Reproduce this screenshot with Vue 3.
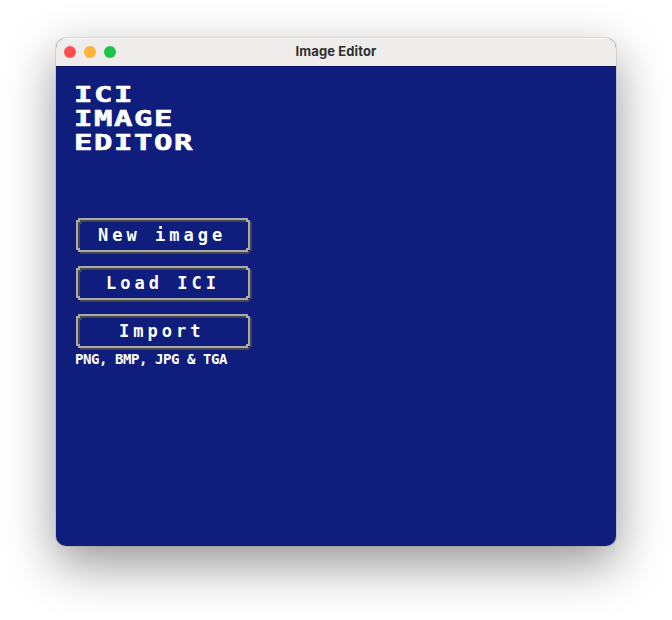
<script setup>
const titleLines = ['ICI', 'IMAGE', 'EDITOR']
const actions = [
  { label: 'New image', left: 22 },
  { label: 'Load ICI', left: 30 },
  { label: 'Import', left: 43 },
]
</script>

<template>
  <main class="desktop">
    <section class="window">
      <header class="titlebar">
        <div class="lights">
          <i class="light red"></i><i class="light amber"></i><i class="light green"></i>
        </div>
        <span class="caption">Image Editor</span>
      </header>
      <div class="content">
        <h1 class="title">
          <span v-for="line in titleLines" :key="line" class="line">{{ line }}</span>
        </h1>
        <nav class="menu">
          <button v-for="a in actions" :key="a.label" class="action">
            <svg class="frame" width="176" height="36" viewBox="0 0 176 36" fill="none" stroke-width="2" shape-rendering="crispEdges">
              <path stroke="#444647" d="M4 3H173M4 34.5H173M3 4V32M175 4V33M4 5H6M172 34H174" />
              <path stroke="#a9a9a8" d="M2 1H172M2 33H172M1 2V32M173 2V32M2 3H4M170 3H172M2 31H4M170 31H172" />
            </svg>
            <span class="label" :style="{ marginLeft: a.left + 'px' }">{{ a.label }}</span>
          </button>
        </nav>
        <p class="formats">PNG, BMP, JPG &amp; TGA</p>
      </div>
    </section>
  </main>
</template>

<style>
body { background: #fff; overflow: hidden; }
</style>

<style scoped>
.desktop { box-sizing: border-box; height: 620px; padding: 38px 56px 0; }
.window {
  width: 560px;
  height: 508px;
  border-radius: 10px;
  overflow: hidden;
  background: #0f1e7d;
  box-shadow: 0 0 0 1px rgba(0, 0, 0, 0.08), 0 18px 50px rgba(0, 0, 0, 0.42);
}
.titlebar {
  position: relative;
  box-sizing: border-box;
  height: 28px;
  display: flex;
  align-items: center;
  justify-content: center;
  background: #eeedeb;
  box-shadow: inset 0 1px #f8f8f7;
}
.lights { position: absolute; left: 8px; top: 8px; display: flex; gap: 8px; }
.light { width: 12px; height: 12px; border-radius: 50%; }
.red { background: #ff4f52; }
.amber { background: #ffb13a; }
.green { background: #1bc446; }
.caption {
  margin-top: -2px;
  font: 700 13px/26px Inter, sans-serif;
  color: #2f2f2f;
  letter-spacing: 0.1px;
}
.content {
  box-sizing: border-box;
  height: 480px;
  padding: 16px 20px;
  border-top: 1px solid #08105f;
  color: #fff;
  font-family: "DejaVu Sans Mono", monospace;
}
.title {
  margin: 0 0 0 -2px;
  font-size: 22px;
  line-height: 24px;
  font-weight: 700;
  letter-spacing: 1.14px;
  transform: scaleX(1.39);
  transform-origin: 0 0;
  -webkit-text-stroke: 0.6px #fff;
}
.line { display: block; }
.menu { display: flex; flex-direction: column; gap: 12px; margin-top: 63px; }
.action {
  position: relative;
  display: flex;
  align-items: flex-start;
  width: 176px;
  height: 36px;
  padding: 0;
  border: 0;
  background: none;
  color: #fff;
}
.frame { position: absolute; left: 0; top: 0; }
.label {
  font: 700 17px/34px "DejaVu Sans Mono", monospace;
  letter-spacing: 4px;
  white-space: nowrap;
}
.formats {
  margin: 1px 0 0 -1px;
  font-size: 14px;
  line-height: 16px;
  font-weight: 700;
  letter-spacing: -0.43px;
}
</style>
